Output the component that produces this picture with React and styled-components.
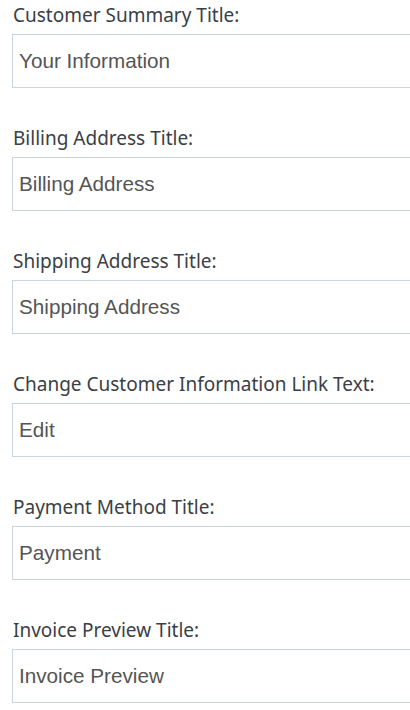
import React from 'react';
import styled, { createGlobalStyle } from 'styled-components';

const GlobalStyle = createGlobalStyle`
  html, body {
    margin: 0;
    padding: 0;
    background: #fff;
  }
`;

const Form = styled.div`
  display: flex;
  flex-direction: column;
  gap: 35px;
  padding-left: 12px;
`;

const Field = styled.div`
  display: flex;
  flex-direction: column;
  gap: 4px;
`;

const Label = styled.label`
  font-family: 'Noto Sans', 'Open Sans', sans-serif;
  font-size: 19px;
  line-height: 30px;
  color: #3a4046;
  padding-left: 1px;
  white-space: nowrap;
`;

// the field runs past the right edge in the screenshot, so no right border
const Input = styled.input`
  box-sizing: border-box;
  width: 100%;
  height: 54px;
  border: 1px solid #ccd5dc;
  border-right: none;
  border-radius: 0;
  padding: 0 6px;
  font-family: 'Liberation Sans', Arial, sans-serif;
  font-size: 20.7px;
  color: #555;
  background: #fff;
  outline: none;
`;

const fields = [
  ['Customer Summary Title:', 'Your Information'],
  ['Billing Address Title:', 'Billing Address'],
  ['Shipping Address Title:', 'Shipping Address'],
  ['Change Customer Information Link Text:', 'Edit'],
  ['Payment Method Title:', 'Payment'],
  ['Invoice Preview Title:', 'Invoice Preview'],
];

export default function App() {
  return (
    <>
      <GlobalStyle />
      <Form>
        {fields.map(([label, value]) => (
          <Field key={label}>
            <Label>{label}</Label>
            <Input defaultValue={value} />
          </Field>
        ))}
      </Form>
    </>
  );
}
